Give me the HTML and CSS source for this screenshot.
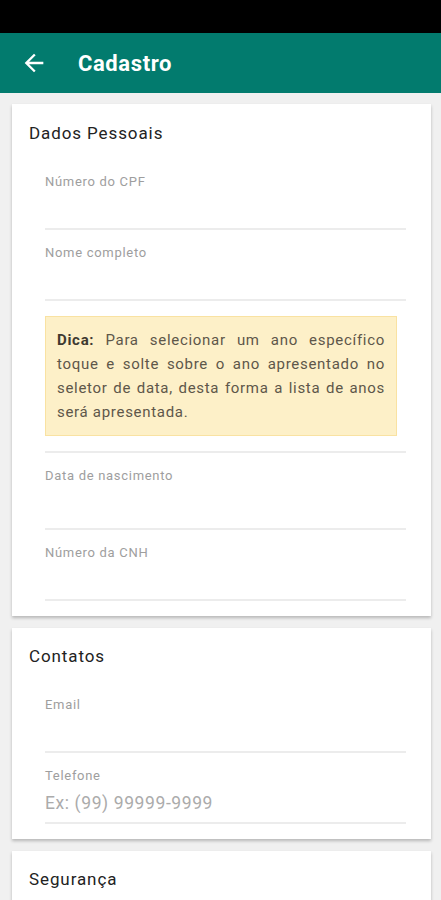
FILE: index.html
```html
<!DOCTYPE html>
<html lang="pt-BR">
<head>
    <meta charset="UTF-8">
    <meta name="viewport" content="width=device-width, initial-scale=1.0">
    <title>Cadastro</title>
    <link rel="stylesheet" href="styles.css">
</head>
<body>
    <div class="status-bar"></div>

    <header class="toolbar">
        <button class="back" type="button" aria-label="Voltar">
            <svg width="28" height="28" viewBox="0 0 24 24">
                <path d="M20 11H7.83l5.59-5.59L12 4l-8 8 8 8 1.41-1.41L7.83 13H20v-2z" fill="#fff"/>
            </svg>
        </button>
        <h1>Cadastro</h1>
    </header>

    <main class="content">
        <section class="card">
            <h2>Dados Pessoais</h2>
            <div class="field">
                <label>Número do CPF</label>
                <input type="text">
            </div>
            <div class="field">
                <label>Nome completo</label>
                <input type="text">
            </div>
            <div class="tip-row">
                <p class="tip"><strong>Dica:</strong> Para selecionar um ano específico toque e solte sobre o ano apresentado no seletor de data, desta forma a lista de anos será apresentada.</p>
            </div>
            <div class="field tall">
                <label>Data de nascimento</label>
                <input type="text">
            </div>
            <div class="field">
                <label>Número da CNH</label>
                <input type="text">
            </div>
        </section>

        <section class="card">
            <h2>Contatos</h2>
            <div class="field">
                <label>Email</label>
                <input type="email">
            </div>
            <div class="field">
                <label>Telefone</label>
                <input type="tel" placeholder="Ex: (99) 99999-9999">
            </div>
        </section>

        <section class="card">
            <h2>Segurança</h2>
            <div class="field">
                <label>Senha</label>
                <input type="password">
            </div>
        </section>
    </main>
</body>
</html>
```

FILE: styles.css
```css
body {
    margin: 0;
    padding: 0;
    font-family: Roboto, 'Noto Sans', sans-serif;
    background-color: #f0f0f0;
    color: #222;
    overflow: hidden;
}
.status-bar {
    height: 33px;
    background-color: #000;
}
.toolbar {
    height: 60px;
    background-color: #027b6e;
    display: flex;
    align-items: center;
    padding: 0 0 0 20px;
}
.back {
    background: none;
    border: none;
    padding: 0;
    width: 28px;
    height: 28px;
    display: flex;
    cursor: pointer;
}
.toolbar h1 {
    margin: 0 0 0 30px;
    color: #fff;
    font-size: 22px;
    font-weight: 700;
    letter-spacing: 0.6px;
}
.content {
    padding: 11px 10px 0 12px;
}
.card {
    background: #fff;
    padding: 16px 25px 15px 17px;
    box-shadow: 0 2px 3px rgba(0, 0, 0, 0.24);
    margin-bottom: 12px;
}
.card:first-child {
    padding-top: 17px;
}
.card h2 {
    margin: 0 0 14px;
    font-size: 17px;
    font-weight: 400;
    line-height: 24px;
    letter-spacing: 0.9px;
    color: #222;
}
.field {
    margin-left: 16px;
    padding-top: 15px;
    border-bottom: 2px solid #ececec;
}
.field label {
    display: block;
    font-size: 13px;
    line-height: 16px;
    letter-spacing: 0.7px;
    color: #9e9e9e;
}
.field input {
    display: block;
    width: 100%;
    box-sizing: border-box;
    height: 38px;
    border: none;
    outline: none;
    padding: 0;
    font-family: inherit;
    font-size: 17.5px;
    letter-spacing: 0.6px;
    color: #333;
    background: transparent;
}
.field input::placeholder {
    color: #ababab;
}
.field.tall input {
    height: 44px;
}
.tip-row {
    margin-left: 16px;
    padding: 15px 9px 15px 0;
    border-bottom: 2px solid #ececec;
}
.tip {
    margin: 0;
    background-color: #fdf0c8;
    border: 1px solid #f9e2a2;
    padding: 11px 11px;
    font-size: 15px;
    line-height: 24px;
    letter-spacing: 0.7px;
    color: #5e574a;
    text-align: justify;
}
.tip strong {
    color: #3f3a30;
}
```
